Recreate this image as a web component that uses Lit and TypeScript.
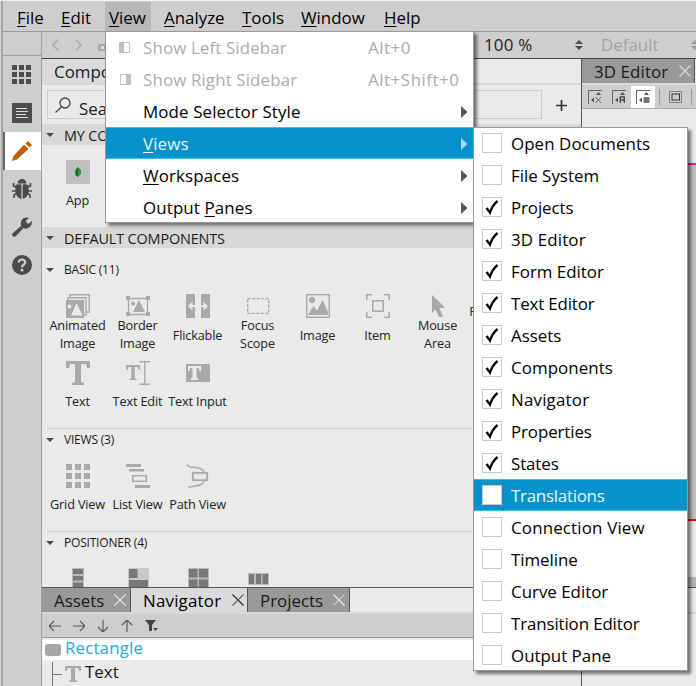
import { LitElement, html, css, svg, nothing } from "lit";
import { customElement } from "lit/decorators.js";
import { classMap } from "lit/directives/class-map.js";

const G = "#a9a9a9";
const D = "#4b4b4b";
const P = "#787878";

const glyphT = svg`<path fill=${G} d="M0 0H24V7H21L20 3H15V21L18 22V24H6V22L9 21V3H4L3 7H0Z"/>`;

const ic = (w: number, h: number, body: unknown) =>
  html`<svg width=${w} height=${h} viewBox="0 0 ${w} ${h}">${body}</svg>`;

const grid = (size: number, step: number, fill: string) =>
  [0, 1, 2].map((r) => [0, 1, 2].map((c) => svg`<rect x=${c * step} y=${r * step} width=${size} height=${size} fill=${fill}/>`));

const icons: Record<string, unknown> = {
  animated: ic(24, 24, svg`<path fill="none" stroke=${G} stroke-width="1.4" d="M4 4V.7H23.3V18H20M2 7V3.7H20V21H18"/><path fill=${G} fill-rule="evenodd" d="M0 6H18V24H0ZM5 21.500H16.500L10.500 9ZM3.500 10.500A2 2 0 1 0 3.510 10.500Z"/>`),
  border: ic(24, 24, svg`<path fill="none" stroke=${G} stroke-width="1.300" d="M2.500 4.500H21.500V20.500H2.500Z"/><g fill=${G}><path d="M0 2H4V6H0ZM20 2H24V6H20ZM0 18H4V22H0ZM20 18H24V22H20ZM7 18L13 6L19 18Z"/><circle cx="7" cy="9.500" r="2"/></g>`),
  flick: ic(24, 24, svg`<path fill=${G} d="M0 0H9V24H0ZM15 0H24V24H15Z"/><path fill="#eaeaea" d="M2 12L6.500 7.500V11H9V13H6.500V16.500ZM22 12L17.500 7.500V11H15V13H17.500V16.500Z"/>`),
  focus: ic(24, 24, svg`<rect x="1.700" y="4.700" width="21" height="14.600" fill="none" stroke=${G} stroke-width="1.300" stroke-dasharray="3 1.500"/>`),
  image: ic(24, 24, svg`<rect x=".7" y=".7" width="22.600" height="22.600" fill="none" stroke=${G} stroke-width="1.400"/><path fill=${G} d="M2 21L7.500 12L11 17L16.500 6L22 18V21Z"/><circle cx="6" cy="6" r="3" fill=${G}/>`),
  item: ic(24, 24, svg`<path fill="none" stroke=${G} stroke-width="1.500" d="M.8 6V.8H6M18 .8H23.200V6M23.200 18V23.200H18M6 23.200H.8V18M6.800 6.800H17.200V17.200H6.800Z"/>`),
  mouse: ic(24, 24, svg`<path fill=${G} d="M6 1V19L9.500 15.500L13 23H17L13.500 14.500L19 13.500Z"/>`),
  text: ic(24, 24, glyphT),
  edit: ic(24, 24, svg`<g transform="translate(0 4) scale(.58 .63)">${glyphT}</g><path fill="none" stroke=${G} stroke-width="1.400" d="M13.500 .7H24M18.800 .7V23.300M13.500 23.300H24"/>`),
  input: ic(24, 24, svg`<path fill=${G} d="M0 3H24V21H0Z"/><path fill="#eaeaea" d="M2 5H15V10H13.500L13 7H10.500V17H12V19H5V17H6.500V7H4L3.500 10H2Z"/>`),
  grid: ic(24, 24, grid(6, 9, G)),
  list: ic(24, 24, svg`<path fill=${G} d="M0 0H15V3H0ZM3 5H18V7.500H3ZM9 21H24V24H9Z"/><rect x="6.700" y="11.700" width="13.600" height="5.600" fill="none" stroke=${G} stroke-width="1.500"/>`),
  path: ic(24, 24, svg`<path fill="none" stroke=${G} stroke-width="1.400" d="M1 .5C3 5 8 2 14 4.500Q18 6 18 8M18 17C16 23 9 21 2.500 23.500"/><rect x="6.800" y="8.800" width="14.400" height="7.400" fill="none" stroke=${G} stroke-width="1.800"/>`),
  column: ic(24, 24, svg`<path fill="#b9b9b9" d="M6 0H18V24H6Z"/><path fill=${P} d="M7 1H17V6H7ZM7 8H17V12.500H7ZM7 14.500H17V20H7Z"/>`),
  flow: ic(24, 24, svg`<path fill="#c9c9c9" d="M2 0H23V24H2Z"/><path fill=${P} d="M3 1H11.500V10H3ZM3 12H22V24H3Z"/>`),
  gridpos: ic(24, 24, svg`<path fill="#b9b9b9" d="M2 0H23V24H2Z"/><path fill=${P} d="M3 1H11.500V9.500H3ZM13 1H22V9.500H13ZM3 11.500H11.500V20H3ZM13 11.500H22V20H13Z"/>`),
  row: ic(24, 24, svg`<path fill="#b9b9b9" d="M2 5H23V17H2Z"/><path fill=${P} d="M3 6H8V16H3ZM10 6H15V16H10ZM16.500 6H22V16H16.500Z"/>`),
  app: ic(24, 24, svg`<path fill="#bfbfbf" d="M0 0H24V24H0Z"/><path fill="#2f9e2c" d="M12 7L15 10V14L12 17L9.500 15V10Z"/><path fill="#176f25" d="M9.500 10L12 7V17L9.500 15Z"/>`),
};

const close = (a: string, b: string) =>
  ic(12, 12, svg`<path stroke=${a} stroke-width="1.100" d="M.5 .5L11.500 11.500"/><path stroke=${b} stroke-width="1.100" d="M11.500 .5L.5 11.500"/>`);
const tri = ic(8, 4, svg`<path fill=${D} d="M0 0H8L4 4Z"/>`);
const updown = (c: string) => ic(8, 10, svg`<path fill=${c} d="M0 4L4 0L8 4ZM0 6H8L4 10Z"/>`);

@customElement("app-root")
export class AppRoot extends LitElement {
  static styles = css`
    :host { display: block; position: relative; width: 696px; height: 686px; overflow: hidden; box-sizing: border-box;
      background: #d0cdce; color: #1a1a1a; font: 16.9px/20px "Open Sans", "Noto Sans", sans-serif; white-space: nowrap; }
    * { box-sizing: border-box; }
    svg { display: block; flex: none; }
    u { text-decoration-thickness: 1px; text-underline-offset: 2px; }
    .frame { display: flex; height: 686px; border-top: 1px solid #f2f2f2; }
    .edge { width: 3px; background: #a6a6a6; border-left: 1px solid #d5d5d5; flex: none; }
    .window { flex: 1; min-width: 0; display: flex; flex-direction: column; }
    .menubar { height: 31px; display: flex; padding: 1px 0 0 6px; border-bottom: 1px solid #999; color: #000; }
    .mb { padding: 6px 0 0 8px; height: 29px; }
    .mb.open { background: #b9b7b8; }
    .body { flex: 1; display: flex; min-height: 0; }
    .rail { width: 39px; border-right: 1px solid #a0a0a0; flex: none; }
    .railtop { height: 24px; border-bottom: 1px solid #a0a0a0; }
    .mode { height: 38px; display: flex; align-items: center; justify-content: center; }
    .mode.on { background: #fff; border-left: 2px solid #666; padding-right: 2px; }
    .work { flex: 1; min-width: 0; display: flex; flex-direction: column; }
    .toolbar { height: 27px; display: flex; align-items: center; border-bottom: 1px solid #444; padding-left: 10px; }
    .nav { display: flex; gap: 16px; align-items: center; width: 432px; flex: none; }
    .zoomval { width: 91px; color: #222; flex: none; letter-spacing: .2px; }
    .def { color: #a3a3a3; margin-left: 18px; width: 90px; flex: none; }
    .cols { flex: 1; display: flex; min-height: 0; }
    .left { width: 540px; border-right: 1px solid #555; background: #eaeaea; display: flex; flex-direction: column; flex: none; }
    .ptitle { height: 26px; border-bottom: 2px solid #d8d8d8; display: flex; flex: none; }
    .ptab { width: 140px; background: #dadada; padding: 3px 0 0 12px; }
    .search { height: 39px; padding: 5px 14px 0 5px; display: flex; justify-content: space-between; flex: none; }
    .field { width: 495px; height: 29px; border: 1px solid #ccc; display: flex; padding: 6px; gap: 7px; }
    .field span { padding-top: 2px; }
    .plus { padding-top: 10px; }
    .big { height: 21px; background: #d8d8d8; display: flex; align-items: center; padding: 1px 0 0 4px; gap: 10px; font-size: 14.4px; letter-spacing: -.13px; flex: none; }
    .big span { padding-top: 1px; }
    .small { display: flex; align-items: center; padding-left: 4px; gap: 10px; font-size: 12px; height: 20px; letter-spacing: -.2px; }
    .myapp { height: 82px; padding: 15px 0 0 6px; flex: none; }
    .list { height: 339px; overflow: hidden; flex: none; }
    .items { display: flex; flex-wrap: wrap; width: 500px; padding-left: 6px; }
    .basic { padding-top: 14px; }
    .first { margin-top: 12px; }
    .next { margin-top: 1px; }
    .texts { height: 56px; }
    .views { padding-top: 14px; height: 70px; }
    .pos { padding-top: 15px; }
    .cell { width: 60px; height: 67px; display: flex; flex-direction: column; align-items: center; text-align: center; font-size: 12.700px; line-height: 18px; letter-spacing: -.15px; color: #222; }
    .lab { height: 32px; margin-left: -1px; display: flex; align-items: center; justify-content: center; }
    .basic .lab { height: 34px; margin-top: -1px; }
    .basic .lab.one { height: 34px; margin-top: 0; }
    .gap { height: 12px; border-bottom: 1px solid #ccc; margin-left: 5px; }
    .tabs { height: 27px; border-top: 1px solid #555; border-bottom: 2px solid #d8d8d8; display: flex; flex: none; }
    .tab { height: 24px; padding: 3px 0 0 12px; background: #999; border-right: 1px solid #555; display: flex; justify-content: space-between; padding-right: 3px; }
    .tab svg { margin-top: 3px; }
    .tab.active { background: #dadada; color: #000; letter-spacing: .2px; }
    .a1 { width: 89px; padding-right: 4px; } .a2 { width: 117px; padding-right: 3px; } .a3 { width: 102px; padding-right: 4px; } .a4 { width: 113px; padding-right: 3px; flex: none; letter-spacing: .1px; }
    .navbar { height: 24px; background: #d0cdce; border-bottom: 1px solid #999; display: flex; padding: 6px 0 0 7px; gap: 12px; flex: none; }
    .node { height: 20px; margin-top: 2px; background: #fff; color: #27a9d0; display: flex; gap: 4px; padding-left: 3px; line-height: 16px; letter-spacing: .15px; flex: none; }
    .node svg { margin-top: 4px; }
    .child { display: flex; padding: 2px 0 0 10px; gap: 4px; }
    .child span { line-height: 19px; }
    .right { flex: 1; min-width: 0; background: #eaeaea; display: flex; flex-direction: column; }
    .rtabs { height: 26px; display: flex; border-bottom: 2px solid #dadada; flex: none; }
    .rtools { height: 24px; background: #d0cdce; border-bottom: 1px solid #aaa; display: flex; align-items: center; padding-left: 1px; flex: none; }
    .rt { width: 24px; height: 22px; display: flex; justify-content: center; align-items: center; flex: none; }
    .rt.on { background: #fff; }
    .sep { width: 1px; height: 16px; background: #999; margin: 0 4px; flex: none; }
    .sep.last { margin-left: 3px; }
    .blank { height: 54px; flex: none; }
    .canvas { height: 358px; background: #bfbfbf; border-top: 2px solid #d6249b; border-bottom: 2px solid #f00; flex: none; }
    .sb { height: 11px; margin-top: 56px; background: #b5b5b5; border-bottom: 1px solid #555; flex: none; }
    .below { height: 26px; border-bottom: 2px solid #d8d8d8; flex: none; }
    .menu { position: absolute; background: #fff; box-shadow: inset 0 0 0 1px #999, 3px 3px 3px rgba(0,0,0,.5); padding: 0 1px; color: #000; }
    .main { left: 105px; top: 31px; width: 369px; }
    .sub { left: 473px; top: 127px; width: 215px; }
    .mi { height: 32px; display: flex; align-items: center; padding: 0 5px 0 13px; }
    .mi > svg { margin-top: 1px; }
    .mi.dis { color: #adadad; }
    .mi.sel { background: #0792cb; color: #e6f6ff; border: solid #3bbdf2; border-width: 1px 0; }
    .mi .grow, .mi .txt, .key { padding-top: 1px; }
    .mico { width: 24px; flex: none; }
    .mico svg { margin-top: 1px; }
    .grow { flex: 1; letter-spacing: .13px; }
    .key { width: 100px; letter-spacing: .55px; }
    .sub .mi { padding-left: 8px; }
    .box { width: 20px; height: 20px; border: 1px solid #c8c8c8; background: #fff; margin-right: 9px; }
  `;

  private cell(icon: string, a: string, b = "") {
    return html`<div class="cell">${icons[icon]}<div class=${classMap({ lab: true, one: !b })}><span>${a}${b ? html`<br />${b}` : nothing}</span></div></div>`;
  }

  private mode(body: unknown, on = false) {
    return html`<div class=${classMap({ mode: true, on })}>${ic(20, 20, body)}</div>`;
  }

  private arrow(rot: number) {
    return ic(12, 12, svg`<path transform="rotate(${rot} 6 6)" fill="none" stroke="#555" stroke-width="1.100" d="M0 6H12M5 1L0 6L5 11"/>`);
  }

  private menuItem(label: unknown, key = "", mark: unknown = nothing, sel = false) {
    return html`<div class=${classMap({ mi: true, dis: !!key, sel })}>
      <span class="mico">${mark}</span><span class="grow">${label}</span>
      ${key ? html`<span class="key">${key}</span>` : ic(7, 12, svg`<path fill=${sel ? "#a9daf0" : "#555"} d="M0 0L6.500 6L0 12Z"/>`)}
    </div>`;
  }

  private anchor(extra: unknown) {
    return ic(14, 14, svg`<path fill="none" stroke="#666" d="M.5 14V.5H14"/><path fill="#555" d="M8 5L10.500 2L13 5ZM6 7.500V12.500L3 10Z"/>${extra}`);
  }

  render() {
    const bar: [string, string, number][] = [["F", "ile", 44], ["E", "dit", 52], ["V", "iew", 46], ["A", "nalyze", 86], ["T", "ools", 59], ["W", "indow", 83], ["H", "elp", 60]];
    const views = ["Open Documents", "File System", "Projects", "3D Editor", "Form Editor", "Text Editor", "Assets", "Components", "Navigator", "Properties", "States", "Translations", "Connection View", "Timeline", "Curve Editor", "Transition Editor", "Output Pane"];
    const tweak = [0.07, 0, -0.1, 0.15, 0, -0.15, 0, 0.07, 0.2, -0.1, -0.1, -0.25, 0.17, -0.05, 0, -0.12, 0];
    const pad = [8, 8, 4, 13, 5, 5, 5];
    return html`
      <div class="frame">
        <div class="edge"></div>
        <div class="window">
          <div class="menubar">
            ${bar.map(([k, r, w], i) => html`<div class=${classMap({ mb: true, open: i === 2 })} style="width:${w}px;padding-left:${pad[i]}px"><u>${k}</u>${r}</div>`)}
          </div>
          <div class="body">
            <div class="rail">
              <div class="railtop"></div>
              ${this.mode(grid(5, 7, "#4d4d4d"))}
              ${this.mode(svg`<path fill="#4d4d4d" d="M0 0H20V20H0Z"/><path stroke="#ddd" stroke-width="1" d="M4 5.500H15M4 8.500H16M4 11.500H14M4 14.500H16"/>`)}
              ${this.mode(svg`<path fill="#bf6200" d="M12 3.500L16.500 8L5 18.500L0 20L1.500 15ZM13.500 2.500L16 0L20 4L17.500 6.500Z"/>`, true)}
              ${this.mode(svg`<path fill="none" stroke="#4b4b4b" stroke-width="1.600" d="M1.500 4V7L5 8.500M18.500 4V7L15 8.500M0 12H5M20 12H15M2 19V16L5 14M18 19V16L15 14"/><path fill="#4b4b4b" d="M5.500 4.500A4.500 4.500 0 0 1 14.500 4.500ZM3.500 6Q6 5 9.400 5.500V20Q3 18 3.500 11ZM10.600 5.500Q14 5 16.500 6V11Q17 18 10.600 20Z"/>`)}
              ${this.mode(svg`<path fill="#4b4b4b" d="M1 16L9 9Q8 3 12 1Q15 0 17 1L13.500 4L16 7L20 4Q20 10 15 11.500Q13 12 11.500 11L4 19Q2 20.500 .7 19Q-.5 17.500 1 16Z"/>`)}
              ${this.mode(svg`<circle cx="10" cy="10" r="10" fill="#4b4b4b"/><path fill="none" stroke="#d0cdce" stroke-width="2.200" d="M6.700 7.500Q7 4.500 10 4.500Q13.300 4.700 13.200 7.500Q13 9 11.200 10Q10 10.800 10 12.500"/><circle cx="10" cy="15.200" r="1.400" fill="#d0cdce"/>`)}
            </div>
            <div class="work">
              <div class="toolbar">
                <div class="nav">
                  ${ic(7, 12, svg`<path fill="none" stroke=${G} stroke-width="1.400" d="M6 .5L1 6L6 11.500"/>`)}
                  ${ic(7, 12, svg`<path fill="none" stroke=${G} stroke-width="1.400" d="M1 .5L6 6L1 11.500"/>`)}
                  ${ic(10, 12, svg`<path fill=${G} d="M0 5H10V12H0Z"/><path fill="#ddd" d="M3 7H6V10H3Z"/>`)}
                </div>
                <span class="zoomval">100 %</span>${updown(D)}<span class="def">Default</span>${updown("#999")}
              </div>
              <div class="cols">
                <div class="left">
                  <div class="ptitle"><div class="ptab">Components</div></div>
                  <div class="search">
                    <div class="field">${ic(18, 16, svg`<circle cx="11" cy="6" r="5" fill="none" stroke="#444" stroke-width="1.300"/><path stroke="#444" stroke-width="1.300" d="M7.500 10L1.500 15.500"/>`)}<span>Search</span></div>
                    <div class="plus">${ic(11, 11, svg`<path stroke="#333" stroke-width="1.700" d="M5.500 0V11M0 5.500H11"/>`)}</div>
                  </div>
                  <div class="big">${tri}<span>MY COMPONENTS</span></div>
                  <div class="myapp">${this.cell("app", "App")}</div>
                  <div class="big">${tri}<span>DEFAULT COMPONENTS</span></div>
                  <div class="list">
                    <div class="small first">${tri}BASIC (11)</div>
                    <div class="items basic">
                      ${this.cell("animated", "Animated", "Image")}${this.cell("border", "Border", "Image")}${this.cell("flick", "Flickable")}${this.cell("focus", "Focus", "Scope")}${this.cell("image", "Image")}${this.cell("item", "Item")}${this.cell("mouse", "Mouse", "Area")}${this.cell("", "Rectangle")}
                    </div>
                    <div class="items texts">${this.cell("text", "Text")}${this.cell("edit", "Text Edit")}${this.cell("input", "Text Input")}</div>
                    <div class="gap"></div>
                    <div class="small next">${tri}VIEWS (3)</div>
                    <div class="items views">${this.cell("grid", "Grid View")}${this.cell("list", "List View")}${this.cell("path", "Path View")}</div>
                    <div class="gap"></div>
                    <div class="small next">${tri}POSITIONER (4)</div>
                    <div class="items pos">${["column", "flow", "gridpos", "row"].map((n) => html`<div class="cell">${icons[n]}</div>`)}</div>
                  </div>
                  <div class="tabs">
                    <div class="tab a1">Assets${close("#ddd", "#ddd")}</div>
                    <div class="tab active a2">Navigator${close("#222", "#666")}</div>
                    <div class="tab a3">Projects${close("#eee", "#c8c8c8")}</div>
                  </div>
                  <div class="navbar">${[0, 180, 270, 90].map((r) => this.arrow(r))}${ic(13, 12, svg`<path fill="#444" d="M0 0H11L7 5V11H4V5ZM8 8H13L10.500 11Z"/>`)}</div>
                  <div class="node">${ic(16, 12, svg`<rect width="16" height="12" rx="3" fill="#a5a5a5"/>`)}<span>Rectangle</span></div>
                  <div class="child">${ic(29, 24, svg`<path fill="none" stroke="#777" d="M.5 0V24M.5 12.500H10"/><g transform="translate(13 4) scale(.67)">${glyphT}</g>`)}<span>Text</span></div>
                </div>
                <div class="right">
                  <div class="rtabs"><div class="tab a4">3D Editor${close("#ddd", "#ddd")}</div></div>
                  <div class="rtools">
                    <div class="rt">${this.anchor(svg`<path stroke="#666" d="M7.500 7L13 13M13 7L7.500 13"/>`)}</div>
                    <div class="rt">${this.anchor(svg`<path fill="none" stroke="#444" stroke-width="1.300" d="M8.200 13V7H12.300V13M8 10H12.300"/>`)}</div>
                    <div class="rt on">${this.anchor(svg`<path fill="#777" d="M7.500 7H13.500V13H7.500Z"/>`)}</div>
                    <div class="sep"></div>
                    <div class="rt">${ic(14, 12, svg`<rect x=".5" y=".5" width="12" height="11" fill="none" stroke="#333" stroke-dasharray="1 1"/><rect x="3" y="3" width="7.500" height="6" fill="none" stroke="#333"/>`)}</div>
                    <div class="sep last"></div>
                  </div>
                  <div class="blank"></div><div class="canvas"></div><div class="sb"></div><div class="below"></div>
                </div>
              </div>
            </div>
          </div>
        </div>
      </div>
      <div class="menu main">
        ${this.menuItem("Show Left Sidebar", "Alt+0", ic(12, 12, svg`<rect x=".5" y=".5" width="10" height="10" fill="#fff" stroke="#c5c5c5"/><path fill="#c0c0c0" d="M0 0H5V11H0Z"/>`))}
        ${this.menuItem("Show Right Sidebar", "Alt+Shift+0", ic(12, 12, svg`<rect x="1.500" y=".5" width="10" height="10" fill="#fff" stroke="#c5c5c5"/><path fill="#c0c0c0" d="M7 0H12V11H7Z"/>`))}
        ${this.menuItem("Mode Selector Style")}
        ${this.menuItem(html`<u>V</u>iews`, "", nothing, true)}
        ${this.menuItem(html`<u>W</u>orkspaces`)}
        ${this.menuItem(html`Output <u>P</u>anes`)}
      </div>
      <div class="menu sub">
        ${views.map((v, i) => html`<div class=${classMap({ mi: true, sel: i === 11 })}><span class="box">${i > 1 && i < 11 ? ic(18, 18, svg`<path fill="none" stroke="#000" stroke-width="2.300" d="M3.500 10L7 14.500Q9.500 7 14.500 3"/>`) : nothing}</span><span class="txt" style="letter-spacing:${tweak[i]}px">${v}</span></div>`)}
      </div>`;
  }
}
